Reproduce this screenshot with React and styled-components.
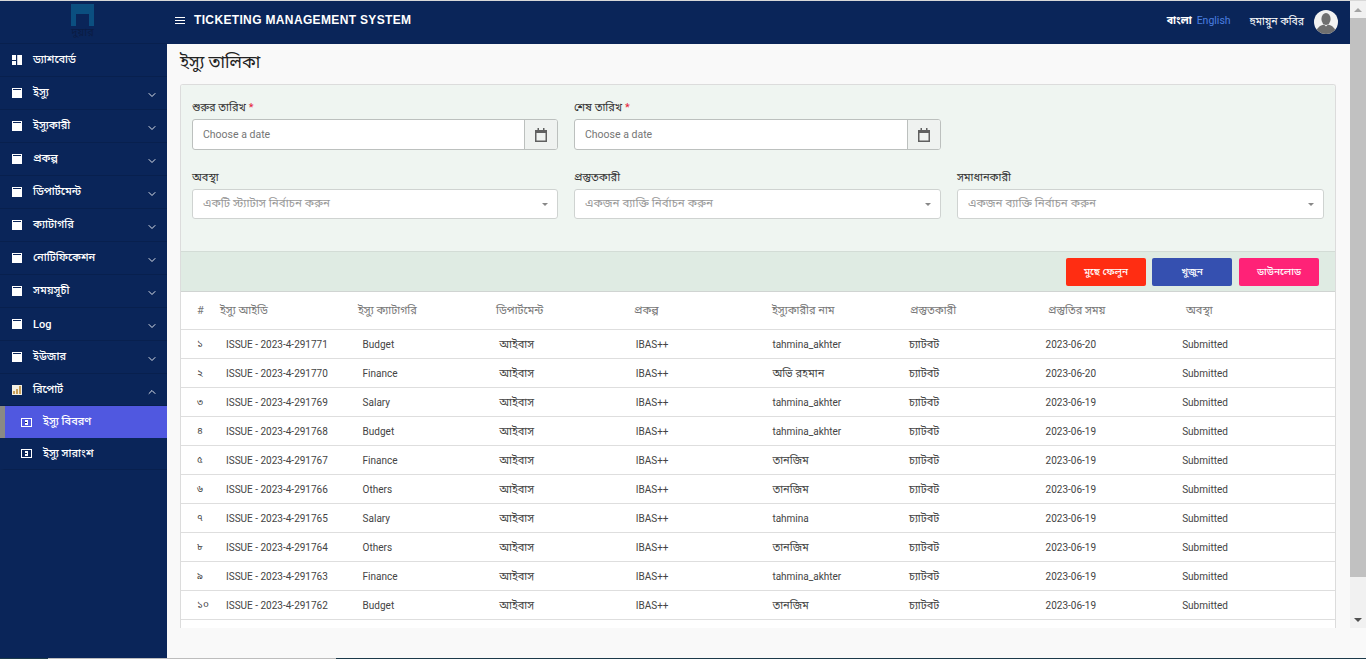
import React from 'react';
import styled, { createGlobalStyle } from 'styled-components';
import { ChevronDown, ChevronUp } from 'lucide-react';

const GlobalStyle = createGlobalStyle`
  html, body {
    margin: 0;
    height: 100%;
    overflow: hidden;
    background: #f9f9f9;
  }
  * {
    box-sizing: border-box;
  }
  body {
    font-family: Roboto, "Noto Sans", "Noto Sans Bengali", "DejaVu Sans", sans-serif;
    font-size: 10px;
    color: #333;
  }
`;

const Page = styled.div`
  height: 659px;
  display: flex;
  flex-direction: column;
  border-top: 1px solid #d8d8d8;
  overflow: hidden;
`;

const Body = styled.div`
  flex: 1;
  min-height: 0;
  display: flex;
`;

const BottomLine = styled.div`
  height: 1px;
  flex: none;
  background: linear-gradient(to right, #1c3a4a 48px, #bdbdbd 48px, #bdbdbd 336px, #1c3a4a 336px);
`;

const Sidebar = styled.aside`
  width: 167px;
  flex: none;
  background: #0a2559;
`;

const LogoBox = styled.div`
  height: 43px;
  display: flex;
  flex-direction: column;
  align-items: center;
  padding: 3px 2px 0 0;
  border-bottom: 1px solid #08204e;
`;

const LogoText = styled.span`
  font-size: 11px;
  line-height: 11px;
  margin-top: 1px;
  color: #0a1c44;
`;

const MenuItem = styled.div`
  height: ${(p) => (p.$short ? 32 : 33)}px;
  display: flex;
  align-items: center;
  padding: 0 9px 0 12px;
  color: #fff;
  font-size: 11px;
  font-weight: 500;
  border-bottom: 1px solid #08204e;
`;

const MenuLabel = styled.span`
  flex: 1;
  margin-left: 11px;
`;

const MenuArrow = styled.span`
  display: flex;
  color: #dfe3ea;
  margin-top: 4px;
`;

const SubItem = styled.div`
  height: 32px;
  display: flex;
  align-items: center;
  padding-left: 16px;
  color: #fff;
  font-size: 11px;
  font-weight: 500;
  background: ${(p) => (p.$active ? '#5058e0' : 'transparent')};
  border-left: 5px solid ${(p) => (p.$active ? '#8a8a84' : 'transparent')};
  border-bottom: ${(p) => (p.$active ? 'none' : '1px solid #08204e')};
`;

const SubLabel = styled.span`
  margin-left: 11px;
`;

const Main = styled.div`
  flex: 1;
  min-width: 0;
  display: flex;
  flex-direction: column;
`;

const TopBar = styled.header`
  height: 43px;
  flex: none;
  display: flex;
  align-items: center;
  background: #0a2559;
  color: #fff;
  padding: 0 12px 0 8px;
`;

const BurgerIcon = styled.svg`
  width: 10px;
  height: 7px;
  margin-top: -4px;
`;

const BrandTitle = styled.span`
  margin-left: 9px;
  margin-top: -6px;
  flex: 1;
  font-family: "Liberation Sans", Arial, sans-serif;
  font-size: 12px;
  font-weight: 700;
  letter-spacing: 0.35px;
`;

const LangLink = styled.span`
  margin-left: 5px;
  margin-top: -4px;
  font-size: 10.5px;
  font-weight: ${(p) => (p.$current ? 700 : 400)};
  color: ${(p) => (p.$current ? '#fff' : '#4a7fe0')};
`;

const UserName = styled.span`
  margin-left: 19px;
  margin-top: -1px;
  font-size: 10.5px;
`;

const Avatar = styled.svg`
  width: 24px;
  height: 24px;
  margin-left: 10px;
  margin-top: -2px;
  border-radius: 50%;
  background: #f2f2f2;
`;

const Content = styled.main`
  flex: 1;
  min-height: 0;
  overflow: hidden;
  padding: 0 14px 0 13px;
`;

const PageTitle = styled.h1`
  margin: 0;
  height: 40px;
  font-size: 17px;
  font-weight: 400;
  line-height: 36px;
  color: #222;
`;

const Card = styled.section`
  height: 544px;
  border: 1px solid #dcdcdc;
  border-bottom: none;
  border-radius: 3px 3px 0 0;
  overflow: hidden;
  background: #fff;
`;

const FilterPanel = styled.div`
  height: 167px;
  background: #eff5f1;
  padding: 12px 11px 0 11px;
  display: grid;
  grid-template-columns: 366px 367px 367px;
  grid-template-rows: 53px 52px;
  column-gap: 16px;
  row-gap: 17px;
  border-bottom: 1px solid #d3dcd6;
`;

const Field = styled.div`
  display: flex;
  flex-direction: column;
`;

const Label = styled.label`
  height: 22px;
  flex: none;
  font-size: 11px;
  color: #333;
  line-height: 22px;
`;

const Star = styled.span`
  color: #e5203a;
  margin-left: 3px;
`;

const DateBox = styled.div`
  height: 31px;
  flex: none;
  display: flex;
  background: #fff;
  border: 1px solid #bcc0be;
  border-radius: 3px;
`;

const DateText = styled.span`
  flex: 1;
  padding-left: 10px;
  font-size: 10.5px;
  line-height: 29px;
  color: #757575;
`;

const DateAddon = styled.span`
  width: 33px;
  display: flex;
  align-items: center;
  justify-content: center;
  background: #eff2f0;
  border-left: 1px solid #bcc0be;
  border-radius: 0 2px 2px 0;
`;

const SelectBox = styled.div`
  height: 30px;
  flex: none;
  display: flex;
  align-items: center;
  padding: 0 10px;
  background: #fff;
  border: 1px solid #cfd3d1;
  border-radius: 3px;
  color: #999;
  font-size: 11.5px;
`;

const SelectText = styled.span`
  flex: 1;
  margin-top: -1px;
`;

const Caret = styled.span`
  width: 0;
  height: 0;
  margin-right: -1px;
  border-left: 3px solid transparent;
  border-right: 3px solid transparent;
  border-top: 3px solid #888;
`;

const ActionBar = styled.div`
  height: 40px;
  display: flex;
  align-items: flex-start;
  justify-content: flex-end;
  gap: 6px;
  padding: 6px 16px 0 0;
  background: #dfebe3;
  border-bottom: 1px solid #d0d4d2;
`;

const ActionButton = styled.button`
  width: 80px;
  height: 28px;
  padding: 0;
  border: none;
  border-radius: 2px;
  color: #fff;
  font-family: inherit;
  font-size: 10px;
  font-weight: 500;
  background: ${(p) => p.$bg};

  &:last-child {
    margin-left: 1px;
  }
`;

const HeadRow = styled.div`
  height: 38px;
  display: grid;
  grid-template-columns: 23px repeat(7, 138px) 1fr;
  align-items: center;
  padding-left: 16px;
  color: #777;
  font-size: 11px;
  border-bottom: 1px solid #dedede;
`;

const Row = styled.div`
  height: 29px;
  display: grid;
  grid-template-columns: 29px repeat(7, 136.6px) 1fr;
  align-items: center;
  padding-left: 16px;
  color: #444;
  font-size: 10px;
  border-bottom: 1px solid #dedede;
`;

const Cell = styled.span`
  white-space: nowrap;
  font-size: ${(p) => (p.$bn ? '11px' : 'inherit')};
  margin-top: ${(p) => (p.$bn ? '2px' : '0')};
`;

const Track = styled.div`
  width: 16px;
  height: 627px;
  flex: none;
  display: flex;
  flex-direction: column;
  align-items: center;
  background: #f1f1f1;
`;

const TrackButton = styled.span`
  height: 17px;
  flex: none;
  display: flex;
  align-items: center;
  justify-content: center;
`;

const Thumb = styled.div`
  width: 100%;
  height: 559px;
  background: #c1c1c1;
`;

const TrackRest = styled.div`
  flex: 1;
`;

const Triangle = styled.span`
  width: 0;
  height: 0;
  border-left: 4px solid transparent;
  border-right: 4px solid transparent;
  ${(p) => (p.$up ? 'border-bottom: 4px solid #a3a3a3;' : 'border-top: 4px solid #505050;')}
`;

const BoxIcon = () => (
  <svg width="10" height="10" viewBox="0 0 10 10">
    <rect width="10" height="10" fill="#fff" />
    <rect x="1" y="1" width="8" height="1" fill="#0a2559" />
  </svg>
);

const DashIcon = () => (
  <svg width="10" height="10" viewBox="0 0 10 10">
    <rect width="10" height="10" fill="#fff" />
    <rect x="4" width="1.2" height="10" fill="#0a2559" />
    <rect y="5" width="4" height="1" fill="#0a2559" />
  </svg>
);

const ChartIcon = () => (
  <svg width="10" height="10" viewBox="0 0 10 10">
    <rect width="10" height="10" fill="#f3efe2" />
    <rect x="1" y="6" width="2" height="3" fill="#c9a05a" />
    <rect x="4" y="4" width="2" height="5" fill="#c9a05a" />
    <rect x="7" y="1" width="2" height="8" fill="#c9a05a" />
  </svg>
);

const SubIcon = () => (
  <svg width="11" height="9" viewBox="0 0 11 9">
    <rect x="0.5" y="0.5" width="10" height="8" fill="none" stroke="#fff" />
    <rect x="4" y="2" width="3" height="5" fill="#fff" />
    <rect x="4" y="4" width="2" height="1" fill="#0a2559" />
  </svg>
);

const MenuIcon = () => (
  <BurgerIcon viewBox="0 0 10 7">
    <path d="M0 .5h10M0 3.5h10M0 6.500h10" stroke="#fff" strokeWidth="1" />
  </BurgerIcon>
);

const LogoMark = () => (
  <svg width="23" height="22" viewBox="0 0 23 22">
    <path d="M0 0h23v22h-5V10H5v12H0z" fill="#0b4f80" />
  </svg>
);

const CalendarIcon = () => (
  <svg width="12" height="14" viewBox="0 0 12 14">
    <path d="M2.500 0h1.500v2h4V0h1.500v2H12v12H0V2h2.500z" fill="#606060" />
    <rect x="1.500" y="5" width="9" height="7.500" fill="#eff2f0" />
  </svg>
);

const AvatarArt = () => (
  <Avatar viewBox="0 0 24 24">
    <ellipse cx="12" cy="9" rx="4.600" ry="6" fill="#6f6f6f" />
    <path d="M2 24c0-6 4-8.500 8-9.500l2 2 2-2c4 1 8 3.500 8 9.500z" fill="#6f6f6f" />
  </Avatar>
);

const menu = [
  { label: 'ড্যাশবোর্ড', icon: <DashIcon /> },
  { label: 'ইস্যু', arrow: 'down' },
  { label: 'ইস্যুকারী', arrow: 'down' },
  { label: 'প্রকল্প', arrow: 'down' },
  { label: 'ডিপার্টমেন্ট', arrow: 'down' },
  { label: 'ক্যাটাগরি', arrow: 'down' },
  { label: 'নোটিফিকেশন', arrow: 'down' },
  { label: 'সময়সূচী', arrow: 'down' },
  { label: 'Log', arrow: 'down' },
  { label: 'ইউজার', arrow: 'down' },
  { label: 'রিপোর্ট', arrow: 'up', icon: <ChartIcon />, short: true },
];

const headers = ['#', 'ইস্যু আইডি', 'ইস্যু ক্যাটাগরি', 'ডিপার্টমেন্ট', 'প্রকল্প', 'ইস্যুকারীর নাম', 'প্রস্তুতকারী', 'প্রস্তুতির সময়', 'অবস্থা'];

const rows = [
  ['১', '291771', 'Budget', 'tahmina_akhter', '2023-06-20'],
  ['২', '291770', 'Finance', 'অভি রহমান', '2023-06-20'],
  ['৩', '291769', 'Salary', 'tahmina_akhter', '2023-06-19'],
  ['৪', '291768', 'Budget', 'tahmina_akhter', '2023-06-19'],
  ['৫', '291767', 'Finance', 'তানজিম', '2023-06-19'],
  ['৬', '291766', 'Others', 'তানজিম', '2023-06-19'],
  ['৭', '291765', 'Salary', 'tahmina', '2023-06-19'],
  ['৮', '291764', 'Others', 'তানজিম', '2023-06-19'],
  ['৯', '291763', 'Finance', 'tahmina_akhter', '2023-06-19'],
  ['১০', '291762', 'Budget', 'তানজিম', '2023-06-19'],
];

const DateField = ({ label }) => (
  <Field>
    <Label>
      {label}
      <Star>*</Star>
    </Label>
    <DateBox>
      <DateText>Choose a date</DateText>
      <DateAddon>
        <CalendarIcon />
      </DateAddon>
    </DateBox>
  </Field>
);

const SelectField = ({ label, placeholder }) => (
  <Field>
    <Label>{label}</Label>
    <SelectBox>
      <SelectText>{placeholder}</SelectText>
      <Caret />
    </SelectBox>
  </Field>
);

const App = () => {
  return (
    <Page>
      <GlobalStyle />
      <Body>
        <Sidebar>
          <LogoBox>
            <LogoMark />
            <LogoText>দুয়ার</LogoText>
          </LogoBox>
          {menu.map((item) => (
            <MenuItem key={item.label} $short={item.short}>
              {item.icon || <BoxIcon />}
              <MenuLabel>{item.label}</MenuLabel>
              {item.arrow && (
                <MenuArrow>
                  {item.arrow === 'up' ? <ChevronUp size={12} /> : <ChevronDown size={12} />}
                </MenuArrow>
              )}
            </MenuItem>
          ))}
          <SubItem $active>
            <SubIcon />
            <SubLabel>ইস্যু বিবরণ</SubLabel>
          </SubItem>
          <SubItem>
            <SubIcon />
            <SubLabel>ইস্যু সারাংশ</SubLabel>
          </SubItem>
        </Sidebar>
        <Main>
          <TopBar>
            <MenuIcon />
            <BrandTitle>TICKETING MANAGEMENT SYSTEM</BrandTitle>
            <LangLink $current>বাংলা</LangLink>
            <LangLink>English</LangLink>
            <UserName>হুমায়ুন কবির</UserName>
            <AvatarArt />
          </TopBar>
          <Content>
            <PageTitle>ইস্যু তালিকা</PageTitle>
            <Card>
              <FilterPanel>
                <DateField label="শুরুর তারিখ" />
                <DateField label="শেষ তারিখ" />
                <div />
                <SelectField label="অবস্থা" placeholder="একটি স্ট্যাটাস নির্বাচন করুন" />
                <SelectField label="প্রস্তুতকারী" placeholder="একজন ব্যাক্তি নির্বাচন করুন" />
                <SelectField label="সমাধানকারী" placeholder="একজন ব্যাক্তি নির্বাচন করুন" />
              </FilterPanel>
              <ActionBar>
                <ActionButton $bg="#ff2d12">মুছে ফেলুন</ActionButton>
                <ActionButton $bg="#3550b0">খুজুন</ActionButton>
                <ActionButton $bg="#ff2277">ডাউনলোড</ActionButton>
              </ActionBar>
              <HeadRow>
                {headers.map((h) => (
                  <Cell key={h}>{h}</Cell>
                ))}
              </HeadRow>
              {rows.map(([num, id, category, name, date]) => (
                <Row key={id}>
                  <Cell>{num}</Cell>
                  <Cell>ISSUE - 2023-4-{id}</Cell>
                  <Cell>{category}</Cell>
                  <Cell $bn>আইবাস</Cell>
                  <Cell>IBAS++</Cell>
                  <Cell $bn={!/^[a-z_]+$/.test(name)}>{name}</Cell>
                  <Cell $bn>চ্যাটবট</Cell>
                  <Cell>{date}</Cell>
                  <Cell>Submitted</Cell>
                </Row>
              ))}
            </Card>
          </Content>
        </Main>
        <Track>
          <TrackButton>
            <Triangle $up />
          </TrackButton>
          <Thumb />
          <TrackRest />
          <TrackButton>
            <Triangle />
          </TrackButton>
        </Track>
      </Body>
      <BottomLine />
    </Page>
  );
};

export default App;
